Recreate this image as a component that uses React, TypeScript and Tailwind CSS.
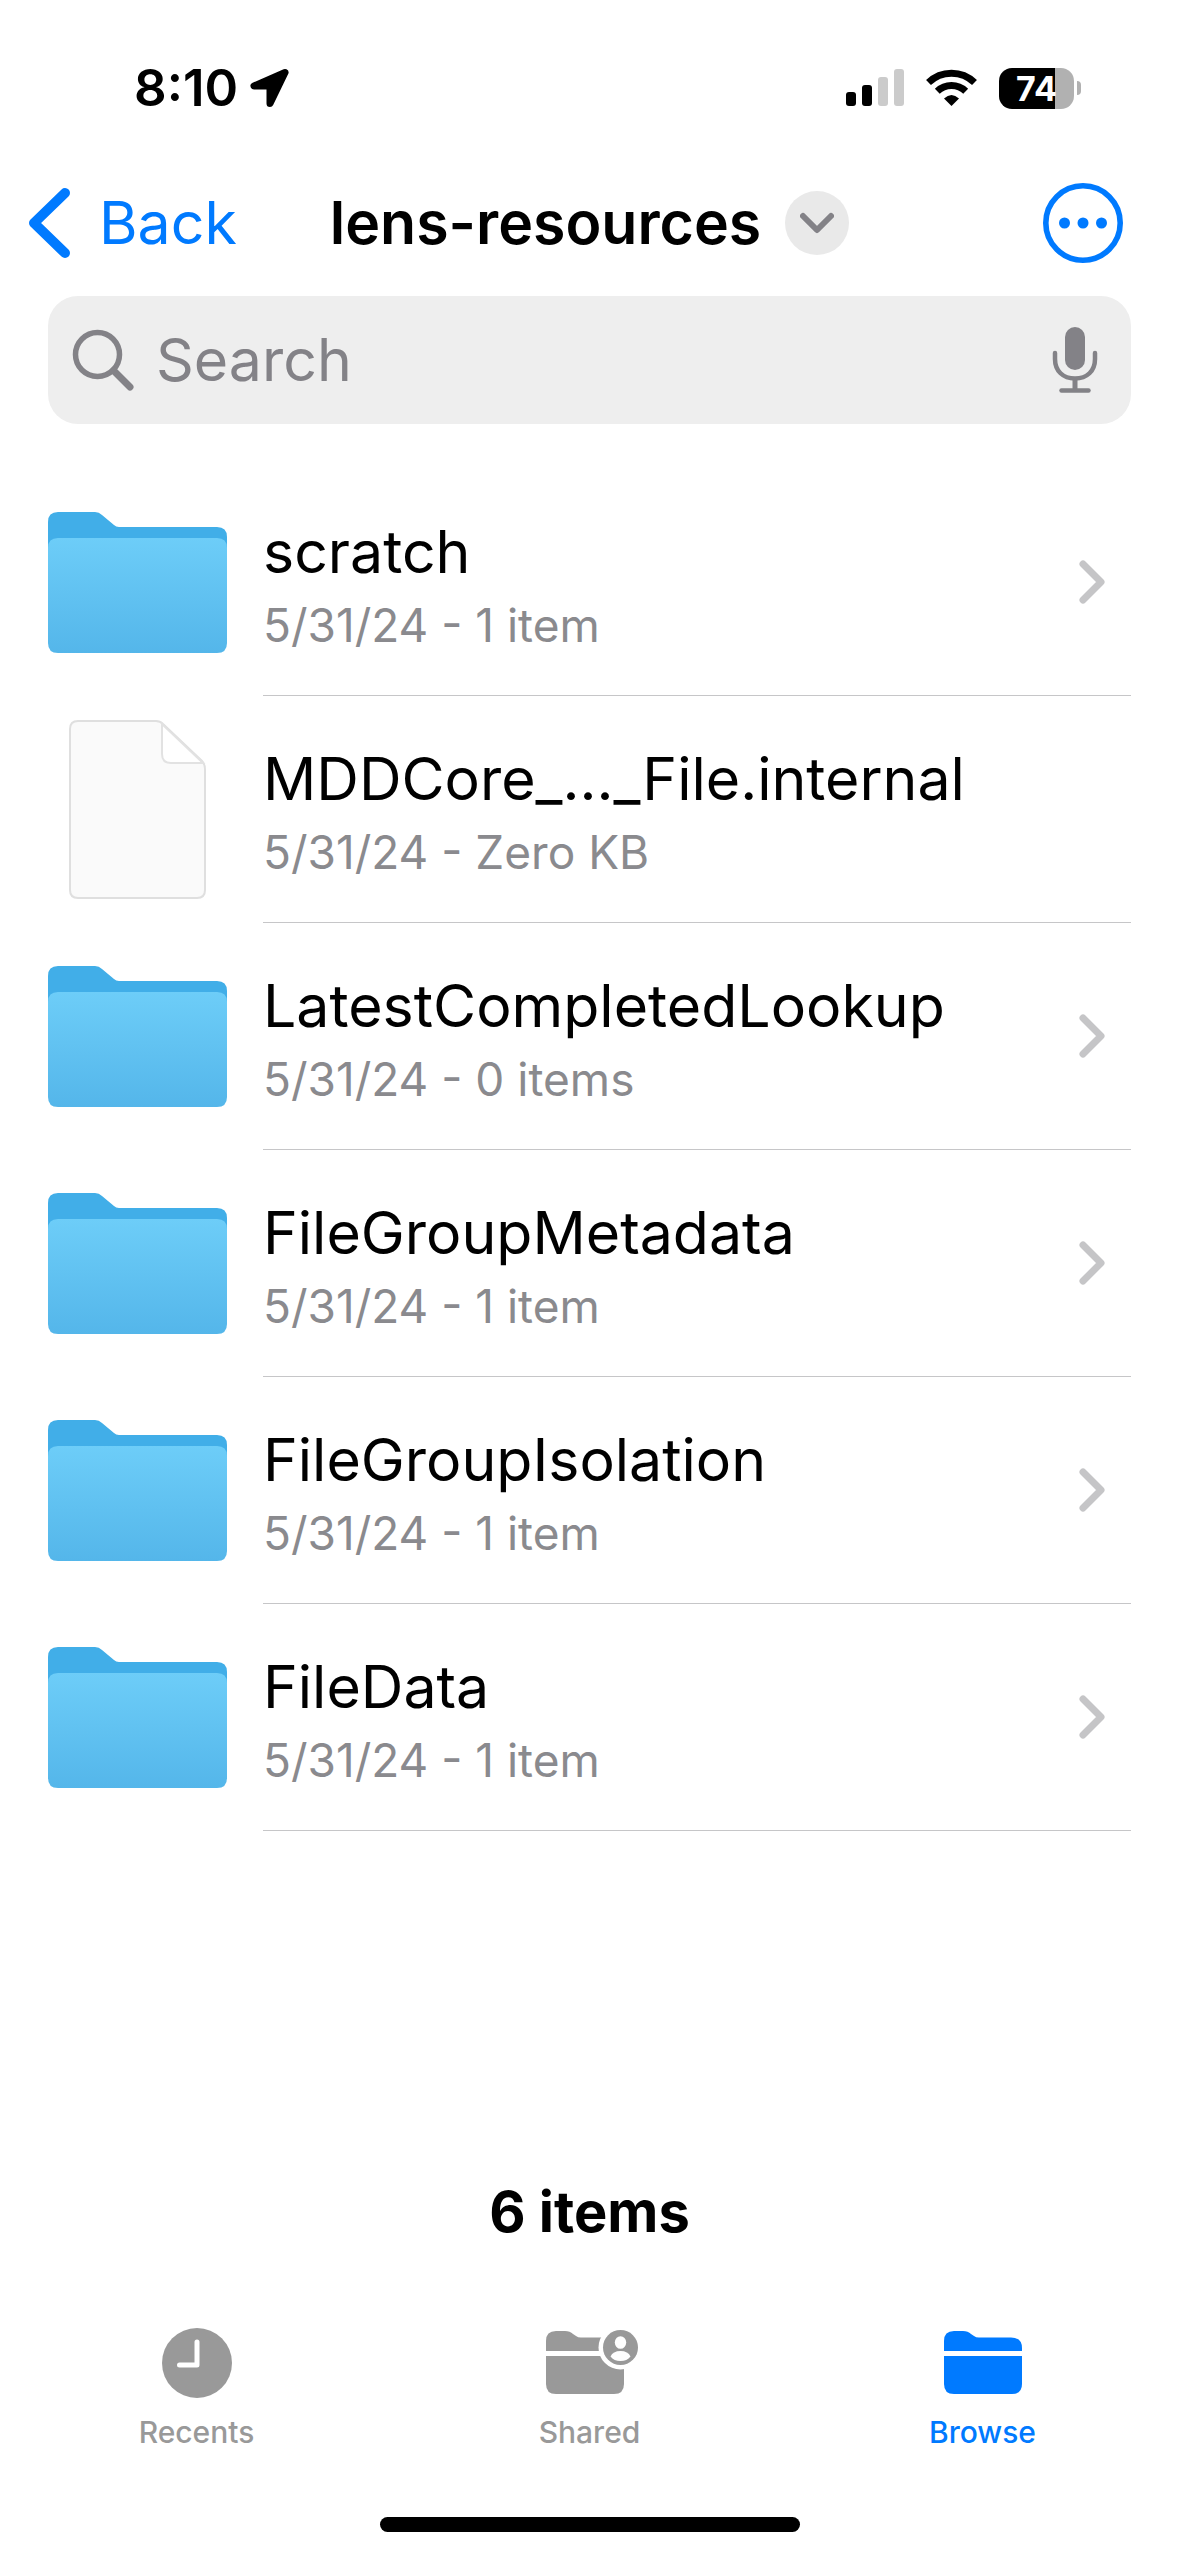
import { useState } from "react";

type Item = {
  name: string;
  info: string;
  kind: "folder" | "file";
};

const items: Item[] = [
  { name: "scratch", info: "5/31/24 - 1 item", kind: "folder" },
  { name: "MDDCore_..._File.internal", info: "5/31/24 - Zero KB", kind: "file" },
  { name: "LatestCompletedLookup", info: "5/31/24 - 0 items", kind: "folder" },
  { name: "FileGroupMetadata", info: "5/31/24 - 1 item", kind: "folder" },
  { name: "FileGroupIsolation", info: "5/31/24 - 1 item", kind: "folder" },
  { name: "FileData", info: "5/31/24 - 1 item", kind: "folder" },
];

const FolderIcon = () => (
  <svg width="179" height="141" viewBox="0 0 179 141" aria-hidden="true">
    <defs>
      <linearGradient id="folder-front" x1="0" y1="0" x2="0" y2="1">
        <stop offset="0" stopColor="#6dcdf8" />
        <stop offset="1" stopColor="#54b6ea" />
      </linearGradient>
    </defs>
    <path
      d="M0 10Q0 0 10 0H47Q51 0 54 3L66 13Q68 15 71 15H169Q179 15 179 25V60H0Z"
      fill="#41aee8"
    />
    <path
      d="M0 36Q0 26 10 26H169Q179 26 179 36V131Q179 141 169 141H10Q0 141 0 131Z"
      fill="url(#folder-front)"
    />
  </svg>
);

const FileIcon = () => (
  <svg width="137" height="179" viewBox="0 0 137 179" fill="none" aria-hidden="true">
    <path
      d="M9 1H87Q91 1 94 4L133 41Q136 44 136 50V170Q136 178 128 178H9Q1 178 1 170V9Q1 1 9 1Z"
      fill="#fafafa"
      stroke="#dfdfdf"
      strokeWidth="2"
    />
    <path d="M93 4V34Q93 43 102 43H134Z" fill="#fff" stroke="#e2e2e2" strokeWidth="2" />
  </svg>
);

const StatusBar = () => (
  <div className="flex h-44 items-center justify-between pl-[134px] pr-[98px]">
    <div className="flex items-center gap-3">
      <span className="text-[51px] leading-[60px] font-semibold">8:10</span>
      <svg width="40" height="40" viewBox="0 0 40 40" aria-hidden="true">
        <path
          d="M35 4L4 17.500H20V35Z"
          transform="translate(0 .5)"
          fill="#000"
          stroke="#000"
          strokeWidth="7"
          strokeLinejoin="round"
        />
      </svg>
    </div>
    <div className="flex items-center">
      <svg width="58" height="38" viewBox="0 0 58 38" aria-hidden="true">
        <rect x="0" y="23" width="10" height="14" rx="3" fill="#000" />
        <rect x="16" y="16" width="10" height="21" rx="3" fill="#000" />
        <rect x="32" y="8" width="10" height="29" rx="3" fill="#cbcbcb" />
        <rect x="48" y="0" width="10" height="37" rx="3" fill="#cbcbcb" />
      </svg>
      <svg
        className="ml-[22px]"
        width="51"
        height="38"
        viewBox="0 0 51 38"
        fill="none"
        stroke="#000"
        strokeWidth="7"
        aria-hidden="true"
      >
        <path d="M2.500 13.500A33 33 0 0 1 48.500 13.500" />
        <path d="M11.300 22.300A20.500 20.500 0 0 1 39.700 22.300" />
        <path d="M18 29.500Q25.500 22.500 33 29.500L25.500 37Z" fill="#000" stroke="none" />
      </svg>
      <div className="ml-[22px] flex h-[41px] w-[75px] items-center justify-center rounded-[13px] bg-[linear-gradient(to_right,#000_75%,#b1b1b1_75%)]">
        <span className="text-[34px] leading-[41px] font-bold text-white">74</span>
      </div>
      <span className="ml-[3px] h-3.5 w-1 rounded-r-full bg-[#b1b1b1]" />
    </div>
  </div>
);

const Header = () => (
  <header className="grid h-[94px] grid-cols-[1fr_auto_1fr] items-center px-7">
    <a
      href="#back"
      className="flex items-center gap-[29px] justify-self-start text-[59px] leading-[76px] text-[#007aff]"
    >
      <svg width="42" height="70" viewBox="0 0 42 70" fill="none" aria-hidden="true">
        <path
          d="M37 5L6 35L37 65"
          stroke="currentColor"
          strokeWidth="10"
          strokeLinecap="round"
          strokeLinejoin="round"
        />
      </svg>
      Back
    </a>
    <div className="flex items-center gap-6">
      <h1 className="text-[59px] leading-[76px] font-semibold">lens-resources</h1>
      <button
        type="button"
        aria-label="Folder options"
        className="flex size-16 items-center justify-center rounded-full bg-[#e9e9e9]"
      >
        <svg width="34" height="22" viewBox="0 0 34 22" fill="none" aria-hidden="true">
          <path
            d="M3 4L17 18L31 4"
            stroke="#838287"
            strokeWidth="6"
            strokeLinecap="round"
            strokeLinejoin="round"
          />
        </svg>
      </button>
    </div>
    <button type="button" aria-label="More" className="mr-7 justify-self-end text-[#007aff]">
      <svg width="80" height="80" viewBox="0 0 80 80" aria-hidden="true">
        <circle cx="40" cy="40" r="37.200" fill="none" stroke="currentColor" strokeWidth="5.600" />
        <circle cx="21.500" cy="40" r="5.500" fill="currentColor" />
        <circle cx="40" cy="40" r="5.500" fill="currentColor" />
        <circle cx="58.500" cy="40" r="5.500" fill="currentColor" />
      </svg>
    </button>
  </header>
);

const SearchBar = () => {
  const [query, setQuery] = useState("");

  return (
    <div className="mx-12 mt-[26px] flex h-32 items-center rounded-[30px] bg-[#eeeeee] pr-[33px] pl-6 text-[#838287]">
      <label htmlFor="search" aria-label="Search">
        <svg width="62" height="62" viewBox="0 0 62 62" fill="none" stroke="currentColor" aria-hidden="true">
          <circle cx="25.500" cy="25.500" r="22" strokeWidth="5.500" />
          <path d="M41.500 41.500L58 58" strokeWidth="7" strokeLinecap="round" />
        </svg>
      </label>
      <input
        id="search"
        type="text"
        placeholder="Search"
        value={query}
        onChange={(e) => setQuery(e.target.value)}
        className="ml-[22px] min-w-0 flex-1 bg-transparent text-[59px] leading-[76px] outline-none placeholder:text-[#838287] placeholder:opacity-100"
      />
      <button type="button" aria-label="Dictate">
        <svg width="46" height="66" viewBox="0 0 46 66" fill="none" stroke="currentColor" aria-hidden="true">
          <rect x="13" y="0" width="20" height="43" rx="10" fill="currentColor" stroke="none" />
          <path
            d="M3 26V32C3 44 11 51.500 23 51.500S43 44 43 32V26"
            strokeWidth="4.500"
            strokeLinecap="round"
          />
          <path d="M23 52V62" strokeWidth="5" />
          <path d="M9.500 63.500H36.500" strokeWidth="4.500" strokeLinecap="round" />
        </svg>
      </button>
    </div>
  );
};

const ItemRow = ({ item }: { item: Item }) => (
  <li>
    <a href={`#${item.name}`} className="flex h-[227px]">
      <div className="flex w-[179px] items-center justify-center">
        {item.kind === "folder" ? <FolderIcon /> : <FileIcon />}
      </div>
      <div className="ml-9 flex flex-1 items-center justify-between border-b border-[#c6c6c8] pr-[25px]">
        <div className="pt-1">
          <div className="text-[59px] leading-[82px]">{item.name}</div>
          <div className="text-[46px] leading-[64px] text-[#8a8a8e]">{item.info}</div>
        </div>
        {item.kind === "folder" && (
          <svg width="28" height="46" viewBox="0 0 28 46" fill="none" aria-hidden="true">
            <path
              d="M5 5L23 23L5 41"
              stroke="#c5c5c7"
              strokeWidth="7"
              strokeLinecap="round"
              strokeLinejoin="round"
            />
          </svg>
        )}
      </div>
    </a>
  </li>
);

const RecentsIcon = () => (
  <svg width="70" height="70" viewBox="0 0 70 70" fill="none" aria-hidden="true">
    <circle cx="35" cy="35" r="35" fill="currentColor" />
    <path
      d="M35 14V37H17.500"
      stroke="#fff"
      strokeWidth="5"
      strokeLinecap="round"
      strokeLinejoin="round"
    />
  </svg>
);

const TabFolderIcon = ({ shared }: { shared?: boolean }) => (
  <svg
    width={shared ? 96 : 78}
    height="70"
    viewBox={shared ? "-4 0 96 70" : "0 0 78 70"}
    fill="currentColor"
    aria-hidden="true"
  >
    <path d="M0 23V13Q0 3 10 3H19Q24 3 27 6L30 8Q32 9.500 35 9.500H67Q78 9.500 78 20V23Z" />
    <path d="M0 28H78V56Q78 66 68 66H10Q0 66 0 56Z" />
    {shared && (
      <>
        <circle cx="74.500" cy="19.500" r="22" fill="#fff" />
        <circle cx="74.500" cy="19.500" r="17.500" />
        <ellipse cx="74.500" cy="14.500" rx="5.700" ry="6.300" fill="#fff" />
        <path d="M64.500 28.500Q67 23 74.500 23T84.500 28.500Q81 33 74.500 33T64.500 28.500Z" fill="#fff" />
      </>
    )}
  </svg>
);

const TabBar = () => {
  const tab = "flex flex-col items-center gap-4 text-[30px] leading-9 font-medium";

  return (
    <nav className="grid grid-cols-3">
      <a href="#recents" className={`${tab} text-[#999999]`}>
        <RecentsIcon />
        Recents
      </a>
      <a href="#shared" className={`${tab} text-[#999999]`}>
        <TabFolderIcon shared />
        Shared
      </a>
      <a href="#browse" aria-current="page" className={`${tab} text-[#007aff]`}>
        <TabFolderIcon />
        Browse
      </a>
    </nav>
  );
};

const App = () => {
  return (
    <div className="flex min-h-screen flex-col bg-white font-['Inter',sans-serif] text-black">
      <StatusBar />
      <Header />
      <main className="flex flex-1 flex-col">
        <SearchBar />
        <ul className="mx-12 mt-[45px]">
          {items.map((item) => (
            <ItemRow key={item.name} item={item} />
          ))}
        </ul>
        <p className="mt-auto text-center text-[56px] leading-[80px] font-bold">
          {items.length} items
        </p>
      </main>
      <footer className="mt-[76px] pb-6">
        <TabBar />
        <div className="mx-auto mt-[67px] h-[15px] w-[420px] rounded-full bg-black" />
      </footer>
    </div>
  );
};

export default App;
